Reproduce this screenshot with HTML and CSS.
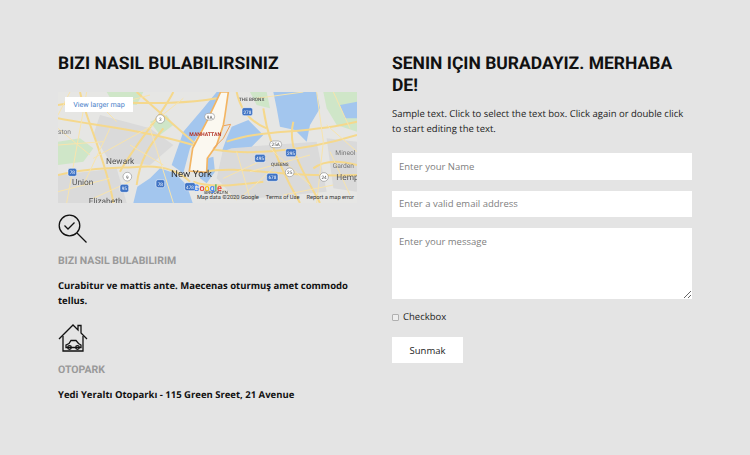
FILE: index.html
```html
<!DOCTYPE html>
<html lang="tr">

<head>
    <meta charset="UTF-8">
    <meta name="viewport" content="width=device-width, initial-scale=1.0">
    <title>Bizi nasıl bulabilirsiniz</title>

    <link rel="stylesheet" href="styles.css">
</head>

<body>
    <section class="contact">
        <div class="col-left">
            <h2 class="title">BIZI NASIL BULABILIRSINIZ</h2>

            <div class="map">
                <svg class="map-art" viewBox="24 21 897 333" width="299" height="111">
                    <rect x="24" y="21" width="897" height="333" fill="#e6e6e4" />
                    <!-- park -->
                    <path class="park" d="M24 170L90 160L130 190L100 230L24 240Z" />
                    <path class="park" d="M170 21H280L260 60L190 55Z" />
                    <path class="park" d="M820 21H921V140L860 120L830 70Z" />
                    <path class="park" d="M600 21H650L660 70L620 60Z" />
                    <path class="park" d="M300 110L350 90L370 120L330 150Z" />
                    <!-- cidade -->
                    <path class="grey" d="M150 90L300 130L370 180L300 240L180 230L130 150Z" />
                    <path class="grey" d="M520 190L800 170L830 320L560 345L500 280Z" />
                    <path class="grey" d="M24 270L200 250L230 354H24Z" />
                    <path class="grey" d="M830 160L921 170V320L850 310Z" />
                    <!-- su -->
                    <path class="water" d="M670 21H800L810 70L780 120L770 170L735 135L690 125L680 70Z" />
                    <path class="water" d="M500 21H515L470 110L420 190L400 265L365 240L400 140L460 70Z" />
                    <path class="water" d="M250 354L262 305L300 280L330 250L375 265L410 300L428 354Z" />
                    <path class="water" d="M545 125L595 105L640 150L605 185L545 190L515 200L530 160Z" />
                    <path class="water" d="M455 225L490 215L495 260L470 295L450 280Z" />
                    <path class="water" d="M870 60L921 50V100L885 100Z" />
                    <!-- estradas -->
                    <path class="road" d="M24 100C120 120 260 130 430 180C560 220 760 200 921 150" />
                    <path class="road" d="M24 270C100 250 190 250 270 245C340 240 390 260 420 290" />
                    <path class="road" d="M90 21C110 110 170 230 190 354" />
                    <path class="road" d="M370 21C330 100 260 170 210 260" />
                    <path class="road" d="M260 21L440 180" />
                    <path class="road" d="M640 70C650 140 670 200 720 300L750 354" />
                    <path class="road" d="M730 110C710 190 760 260 810 354" />
                    <path class="road" d="M470 260C560 240 720 280 921 270" />
                    <path class="road" d="M24 60C170 40 330 70 500 40" />
                    <path class="road" d="M530 170C640 130 760 150 921 110" />
                    <path class="road" d="M790 250C830 220 880 230 921 240" />
                    <path class="road" d="M560 21C570 70 600 110 650 130" />
                    <path class="road" d="M430 290C480 310 560 300 640 290" />
                    <path class="road" d="M340 130C300 180 270 220 260 300" />
                    <path class="road-thin" d="M110 21L50 354M300 130L370 354M520 280L650 220M800 21L820 170L800 354M130 220L310 120M24 180L160 170M570 340L670 250M840 200L900 330M660 190L780 300M200 110L130 40M240 290L130 340M24 130L120 210M60 21L24 90M180 130L100 300M150 70L300 30M400 40L300 120M560 200L600 340M600 260L780 210M700 330L850 300M830 120L921 200M850 21L900 130M24 320L180 280M240 180L340 240M620 40L760 21M500 300L560 345" />
                    <!-- manhattan -->
                    <path class="island" d="M512 21H535L525 90L520 120L500 180L472 220L470 262L418 258L428 190L470 110Z" />
                    <path class="island-edge" d="M522 122L542 118L520 160L490 190" />
                    <!-- rotulos -->
                    <text class="lbl lbl-tiny" x="567" y="47">THE BRONX</text>
                    <text class="lbl lbl-red" x="418" y="152">MANHATTAN</text>
                    <text class="lbl lbl-mid" x="168" y="236">Newark</text>
                    <text class="lbl lbl-big" x="363" y="275">New York</text>
                    <text class="lbl lbl-mid" x="66" y="300">Union</text>
                    <text class="lbl lbl-mid" x="116" y="357">Elizabeth</text>
                    <text class="lbl lbl-small" x="24" y="148">ston</text>
                    <text class="lbl lbl-tiny" x="663" y="244">QUEENS</text>
                    <text class="lbl lbl-small" x="856" y="210">Mineol</text>
                    <text class="lbl lbl-small" x="848" y="248">Garden</text>
                    <text class="lbl lbl-mid" x="859" y="286">Hemp</text>
                    <text class="lbl lbl-tiny" x="463" y="328">BROOKLYN</text>
                    <!-- placas -->
                    <g class="shield"><rect x="576" y="68" width="32" height="24" rx="6" /><text x="592" y="86">278</text></g>
                    <g class="shield"><rect x="614" y="208" width="32" height="24" rx="6" /><text x="630" y="226">495</text></g>
                    <g class="shield"><rect x="707" y="191" width="32" height="24" rx="6" /><text x="723" y="209">295</text></g>
                    <g class="shield"><rect x="650" y="265" width="34" height="24" rx="6" /><text x="667" y="283">678</text></g>
                    <g class="shield"><rect x="54" y="250" width="26" height="24" rx="6" /><text x="67" y="268">78</text></g>
                    <g class="shield"><rect x="210" y="298" width="26" height="24" rx="6" /><text x="223" y="316">95</text></g>
                    <g class="shield"><rect x="318" y="284" width="26" height="24" rx="6" /><text x="331" y="302">78</text></g>
                    <g class="shield"><rect x="404" y="293" width="32" height="24" rx="6" /><text x="420" y="311">478</text></g>
                    <g class="marker"><circle cx="331" cy="102" r="13" /><text x="331" y="108">3</text></g>
                    <g class="marker"><rect x="464" y="85" width="30" height="20" rx="10" /><text x="479" y="101">9A</text></g>
                    <g class="marker"><rect x="659" y="168" width="36" height="20" rx="10" /><text x="677" y="184">25A</text></g>
                    <g class="marker"><circle cx="719" cy="262" r="13" /><text x="719" y="268">25</text></g>
                    <g class="marker"><circle cx="822" cy="276" r="13" /><text x="822" y="282">24</text></g>
                    <g class="marker"><circle cx="232" cy="275" r="13" /><text x="232" y="281">9</text></g>
                    <text class="lbl google" x="430" y="318"><tspan fill="#4285f4">G</tspan><tspan fill="#ea4335">o</tspan><tspan fill="#fbbc05">o</tspan><tspan fill="#4285f4">g</tspan><tspan fill="#34a853">l</tspan><tspan fill="#ea4335">e</tspan></text>
                </svg>
                <a class="map-link" href="#">View larger map</a>
                <div class="map-footer">
                    <span>Map data ©2020 Google</span>
                    <span>Terms of Use</span>
                    <span>Report a map error</span>
                </div>
            </div>

            <div class="info">
                <svg class="icon" viewBox="0 0 30 30" width="30" height="30">
                    <circle cx="11.500" cy="11.500" r="10.300" />
                    <path d="M6.500 11.500L10 15L16.500 8.500" />
                    <path d="M19 19L28.500 28.500" />
                </svg>
                <h5 class="info-label">BIZI NASIL BULABILIRIM</h5>
                <p class="info-text">Curabitur ve mattis ante. Maecenas oturmuş amet commodo tellus.</p>
            </div>

            <div class="info info-park">
                <svg class="icon" viewBox="0 0 30 30" width="30" height="30">
                    <path d="M1 16L15 2L20 7V2.500H23V10L29 16" />
                    <path d="M5 13V28H25V13" />
                    <path d="M8 22L11 20.500L13 17.500H18L20.500 20.500L23 22V24.500H8Z" />
                    <circle class="wheel" cx="11.500" cy="24.500" r="1.800" />
                    <circle class="wheel" cx="19.500" cy="24.500" r="1.800" />
                </svg>
                <h5 class="info-label">OTOPARK</h5>
                <p class="info-text">Yedi Yeraltı Otoparkı - 115 Green Sreet, 21 Avenue</p>
            </div>
        </div>

        <form class="col-right">
            <h2 class="title">SENIN IÇIN BURADAYIZ. MERHABA DE!</h2>
            <p class="intro">Sample text. Click to select the text box. Click again or double click to start editing the text.</p>

            <input class="field" type="text" placeholder="Enter your Name">
            <input class="field" type="email" placeholder="Enter a valid email address">
            <textarea class="field field-msg" placeholder="Enter your message"></textarea>

            <label class="check">
                <input type="checkbox">
                <span>Checkbox</span>
            </label>

            <button class="submit" type="button">Sunmak</button>
        </form>
    </section>
</body>

</html>
```
FILE: styles.css
```css
body {
    font-family: 'Open Sans', 'Liberation Sans', sans-serif;
    background-color: #e4e4e4;
    color: #111111;
    margin: 0;
    padding: 0;
    text-rendering: geometricPrecision;
}

.contact {
    display: flex;
    gap: 35px;
    padding: 53px 58px 0;
    height: 402px;
    overflow: hidden;
}

.col-left {
    width: 299px;
    flex-shrink: 0;
}

.col-right {
    width: 300px;
    flex-shrink: 0;
    display: flex;
    flex-direction: column;
    align-items: flex-start;
}

.title {
    font-family: Roboto, 'Liberation Sans', sans-serif;
    font-size: 17.500px;
    line-height: 22px;
    font-weight: 700;
    margin: 0;
}

/* mapa */
.map {
    position: relative;
    width: 299px;
    height: 111px;
    margin-top: 17px;
    overflow: hidden;
}

.map-art {
    display: block;
    filter: blur(0.3px);
}

.water {
    fill: #a3c6ee;
}

.park {
    fill: #cfe6c8;
}

.grey {
    fill: #dadada;
}

.road {
    fill: none;
    stroke: #f5d88c;
    stroke-width: 6;
}

.road-thin {
    fill: none;
    stroke: #f8e4ac;
    stroke-width: 3;
}

.island {
    fill: #fbf8f0;
    stroke: #f3b562;
    stroke-width: 5;
}

.island-edge {
    fill: none;
    stroke: #eda25a;
    stroke-width: 3;
}

.lbl {
    font-family: Roboto, 'Liberation Sans', sans-serif;
    fill: #555555;
}

.lbl-tiny {
    font-size: 14px;
    font-weight: 500;
}

.lbl-small {
    font-size: 20px;
    fill: #777777;
}

.lbl-mid {
    font-size: 25px;
}

.lbl-big {
    font-size: 29px;
    fill: #333333;
}

.lbl-red {
    font-size: 15.500px;
    font-weight: 700;
    fill: #b3362b;
}

.google {
    font-size: 27px;
    font-weight: 500;
}

.shield rect {
    fill: #3f73c4;
    stroke: #ffffff;
    stroke-width: 1.500;
}

.shield text {
    font-family: Roboto, sans-serif;
    font-size: 14px;
    fill: #ffffff;
    text-anchor: middle;
}

.marker circle,
.marker rect {
    fill: #ffffff;
    stroke: #777777;
    stroke-width: 1.500;
}

.marker text {
    font-family: Roboto, sans-serif;
    font-size: 14px;
    fill: #444444;
    text-anchor: middle;
}

.map-link {
    position: absolute;
    top: 5px;
    left: 7px;
    width: 68px;
    height: 15px;
    background-color: #ffffff;
    color: #4a7fc9;
    font-family: Roboto, sans-serif;
    font-size: 7.200px;
    line-height: 15px;
    text-align: center;
    text-decoration: none;
}

.map-footer {
    position: absolute;
    right: 3px;
    bottom: 0;
    display: flex;
    gap: 7px;
    font-family: Roboto, sans-serif;
    font-size: 5.700px;
    line-height: 9px;
    color: #333333;
}

/* blocos de informacao */
.info {
    margin-top: 11px;
}

.info-park {
    margin-top: 15px;
}

.icon {
    display: block;
    fill: none;
    stroke: #111111;
    stroke-width: 1.300;
}

.info-label {
    font-family: Roboto, 'Liberation Sans', sans-serif;
    font-size: 10.500px;
    line-height: 14px;
    font-weight: 700;
    color: #999999;
    margin: 10px 0 0;
}

.info-text {
    font-size: 9.500px;
    line-height: 15px;
    font-weight: 700;
    margin: 10px 0 0;
}

/* formulario */
.intro {
    font-size: 9.500px;
    line-height: 15px;
    margin: 9px 0 17px;
    color: #222222;
}

.field {
    display: block;
    width: 100%;
    height: 26.500px;
    margin: 0 0 11px;
    padding: 0 7px;
    border: none;
    border-radius: 0;
    background-color: #ffffff;
    font-family: 'Open Sans', sans-serif;
    font-size: 9.500px;
    color: #111111;
    box-sizing: border-box;
}

.field::placeholder {
    color: #808080;
    opacity: 1;
}

.field-msg {
    height: 71px;
    padding-top: 6px;
    margin-bottom: 10px;
    line-height: 15px;
}

.check {
    display: flex;
    align-items: center;
    gap: 4px;
    font-size: 9.500px;
    line-height: 16px;
    color: #222222;
}

.check input {
    appearance: none;
    width: 7px;
    height: 7px;
    margin: 0;
    border: 1px solid #b0b0b0;
    border-radius: 1px;
    background-color: #eeeeee;
    box-sizing: border-box;
}

.submit {
    width: 71px;
    height: 26px;
    margin-top: 12px;
    padding: 0;
    border: none;
    background-color: #ffffff;
    color: #222222;
    font-family: 'Open Sans', sans-serif;
    font-size: 9.500px;
}
```
